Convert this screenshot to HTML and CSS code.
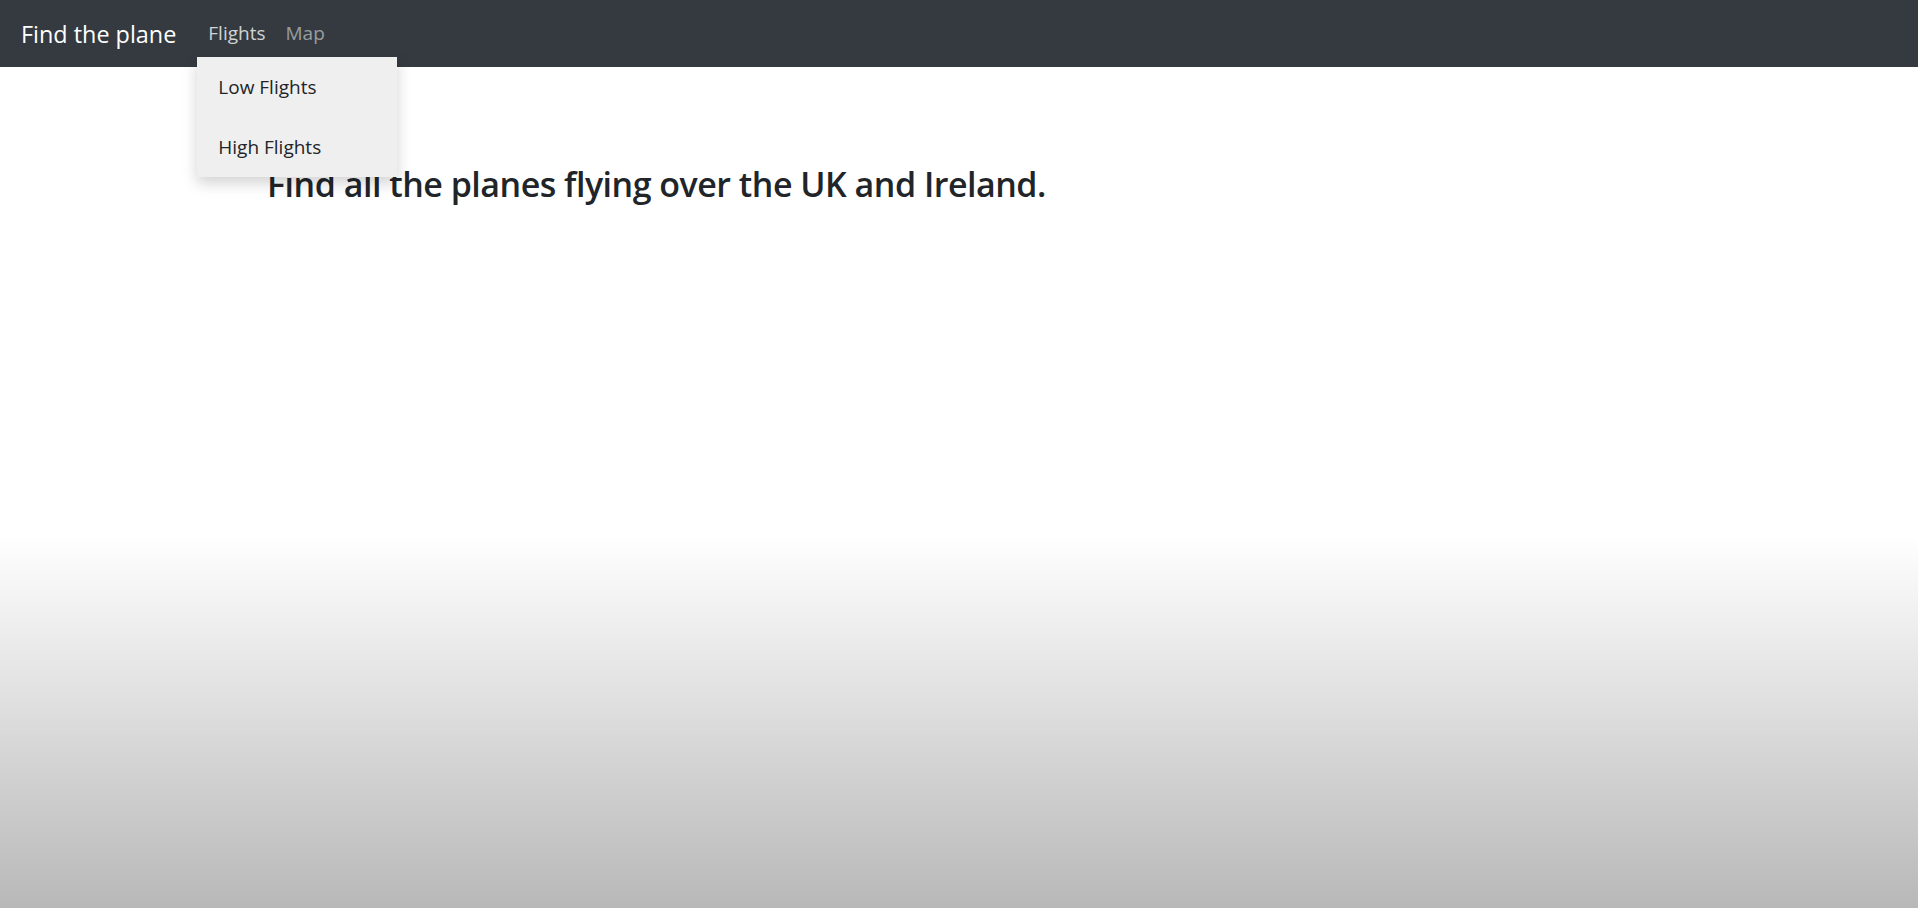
FILE: index.html
```html
<!DOCTYPE html>
<html lang="en">
<head>
<meta charset="utf-8">
<title>Find the plane</title>
<link rel="stylesheet" href="styles.css">
</head>
<body>
<nav class="navbar">
  <a class="brand" href="#">Find the plane</a>
  <ul class="nav">
    <li class="nav-item dropdown">
      <a class="nav-link active" href="#">Flights</a>
      <div class="dropdown-menu">
        <a class="dropdown-item" href="#">Low Flights</a>
        <a class="dropdown-item" href="#">High Flights</a>
      </div>
    </li>
    <li class="nav-item"><a class="nav-link" href="#">Map</a></li>
  </ul>
</nav>
<main class="content">
  <h2 class="title">Find all the planes flying over the UK and Ireland.</h2>
</main>
</body>
</html>
```
FILE: styles.css
```css
* { box-sizing: border-box; }
html, body { height: 100%; }
body {
  margin: 0;
  font-family: "Open Sans", "Noto Sans", sans-serif;
  color: #212529;
  background: linear-gradient(to bottom, #ffffff 0%, #ffffff 59%, #b8b8b8 100%);
}
.navbar {
  height: 67px;
  background: #343a40;
  display: flex;
  align-items: center;
  padding: 0 19px 0 21px;
  position: relative;
  z-index: 2;
}
.brand {
  color: #fff;
  text-decoration: none;
  font-size: 23.4px;
  margin-right: 22px;
  line-height: 36px;
}
.nav {
  list-style: none;
  margin: 0;
  padding: 0;
  display: flex;
}
.nav-item { position: relative; }
.nav-link {
  display: block;
  padding: 0 10px;
  font-size: 19px;
  line-height: 29px;
  color: rgba(255,255,255,.5);
  text-decoration: none;
}
.nav-link.active { color: rgba(255,255,255,.78); }
.dropdown-menu {
  position: absolute;
  left: -1px;
  top: 38px;
  width: 200px;
  background: #f0eff0;
  padding: 0;
  box-shadow: 0 6px 14px rgba(0,0,0,.18);
  display: flex;
  flex-direction: column;
}
.dropdown-item {
  display: block;
  padding: 15.5px 21px;
  font-size: 19px;
  line-height: 29px;
  color: #212529;
  text-decoration: none;
}
.content {
  padding: 97px 0 0 267px;
}
.title {
  margin: 0;
  font-size: 34px;
  font-weight: 600;
  letter-spacing: -0.5px;
  line-height: 1.2;
}
```
